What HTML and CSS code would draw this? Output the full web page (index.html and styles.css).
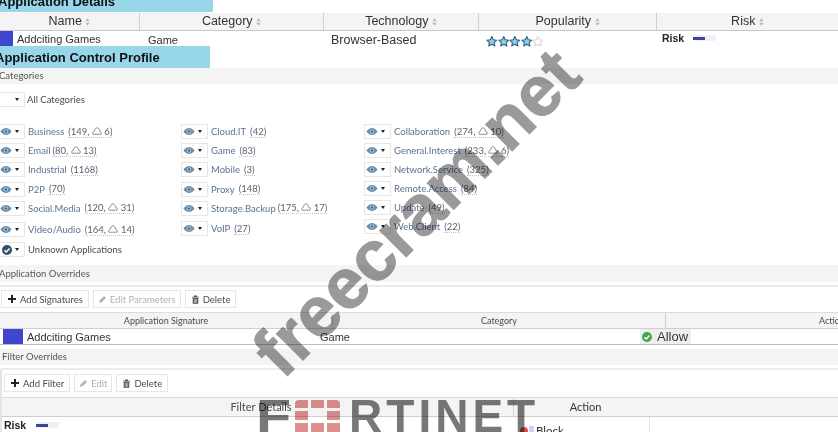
FILE: index.html
```html
<!DOCTYPE html>
<html>
<head>
  <title>Application Control Profile</title>
  <link rel="stylesheet" href="styles.css">
</head>
<body>
  <svg class="icon-defs" width="0" height="0">
    <symbol id="eye" viewBox="0 0 16 10">
      <path d="M0 5C3 1 5.500 0 8 0s5 1 8 5c-3 4-5.500 5-8 5s-5-1-8-5z" fill="#6b8fab"/>
      <circle cx="8" cy="5" r="2.800" fill="#d5e1ea"/>
      <circle cx="8" cy="5" r="1.800" fill="#3d6382"/>
    </symbol>
    <symbol id="cloud" viewBox="0 0 14 10">
      <path d="M1.500 9.500h11c1.300-2.200.3-4-1.800-4C10 2 8.700.6 7 .6 5 .6 3.800 2.500 3.500 5 1.500 5.500.3 7.500 1.500 9.500z" fill="none" stroke="#5a6472" stroke-width="1"/>
    </symbol>
    <symbol id="star" viewBox="0 0 14 14">
      <path d="M7 1l1.800 3.900 4.200.5-3.100 2.900.8 4.200L7 10.400 3.300 12.500l.8-4.200L1 5.400l4.200-.5z" stroke-width="1.300" stroke-linejoin="round"/>
    </symbol>
    <symbol id="trash" viewBox="0 0 10 12">
      <path d="M0 2h10v1.300H0zM3 .3h4V2H3zM1 4h8v8H1z" fill="#4d4d4d"/>
      <path d="M3.200 5v5.800M5 5v5.800M6.800 5v5.800" stroke="#fff" stroke-width=".8"/>
    </symbol>
    <symbol id="pencil" viewBox="0 0 12 12">
      <path d="M0 12l1-4 6.500-6.500 3 3L4 11z" fill="#b4b4b4"/>
    </symbol>
    <symbol id="sort" viewBox="0 0 6 9">
      <path d="M3 0l2.500 3.500h-5zM3 9L.5 5.500h5z" fill="#b8b8b8"/>
    </symbol>
    <symbol id="tick" viewBox="0 0 12 12">
      <circle cx="6" cy="6" r="6"/>
      <path d="M3 6.200l2.200 2.200L9 4.300" fill="none" stroke="#fff" stroke-width="1.700"/>
    </symbol>
  </svg>

  <div class="page">
    <h2 class="banner banner-details">Application Details</h2>

    <div class="app-head">
      <div class="app-th th-name">Name <svg class="sort"><use href="#sort"/></svg></div>
      <div class="app-th th-cat">Category <svg class="sort"><use href="#sort"/></svg></div>
      <div class="app-th th-tech">Technology <svg class="sort"><use href="#sort"/></svg></div>
      <div class="app-th th-pop">Popularity <svg class="sort"><use href="#sort"/></svg></div>
      <div class="app-th th-risk">Risk <svg class="sort"><use href="#sort"/></svg></div>
    </div>
    <div class="app-row">
      <div class="cell-name"><span class="swatch"></span>Addciting Games</div>
      <div class="cell-cat">Game</div>
      <div class="cell-tech">Browser-Based</div>
      <div class="cell-pop">
        <svg class="star on"><use href="#star"/></svg><svg class="star on"><use href="#star"/></svg><svg class="star on"><use href="#star"/></svg><svg class="star on"><use href="#star"/></svg><svg class="star off"><use href="#star"/></svg>
      </div>
      <div class="cell-risk"><b>Risk</b><span class="risk-bar"><span></span></span></div>
    </div>

    <h2 class="banner banner-profile">Application Control Profile</h2>

    <div class="section-bar">Categories</div>
    <div class="all-cats">
      <span class="drop drop-blank"><i class="caret"></i></span>
      <span>All Categories</span>
    </div>

    <div class="cat-grid">
      <div class="cat-col col-a">
        <div class="cat"><span class="drop"><svg class="eye"><use href="#eye"/></svg><i class="caret"></i></span><a>Business</a><span class="count">(149, <svg class="cloud"><use href="#cloud"/></svg> 6)</span></div>
        <div class="cat"><span class="drop"><svg class="eye"><use href="#eye"/></svg><i class="caret"></i></span><a>Email</a><span class="count tight">(80, <svg class="cloud"><use href="#cloud"/></svg> 13)</span></div>
        <div class="cat"><span class="drop"><svg class="eye"><use href="#eye"/></svg><i class="caret"></i></span><a>Industrial</a><span class="count">(1168)</span></div>
        <div class="cat"><span class="drop"><svg class="eye"><use href="#eye"/></svg><i class="caret"></i></span><a>P2P</a><span class="count">(70)</span></div>
        <div class="cat"><span class="drop"><svg class="eye"><use href="#eye"/></svg><i class="caret"></i></span><a>Social.Media</a><span class="count">(120, <svg class="cloud"><use href="#cloud"/></svg> 31)</span></div>
        <div class="cat"><span class="drop"><svg class="eye"><use href="#eye"/></svg><i class="caret"></i></span><a>Video/Audio</a><span class="count">(164, <svg class="cloud"><use href="#cloud"/></svg> 14)</span></div>
        <div class="cat"><span class="drop"><svg class="check"><use href="#tick"/></svg><i class="caret"></i></span><span class="unknown">Unknown Applications</span></div>
      </div>
      <div class="cat-col col-b">
        <div class="cat"><span class="drop"><svg class="eye"><use href="#eye"/></svg><i class="caret"></i></span><a>Cloud.IT</a><span class="count">(42)</span></div>
        <div class="cat"><span class="drop"><svg class="eye"><use href="#eye"/></svg><i class="caret"></i></span><a>Game</a><span class="count">(83)</span></div>
        <div class="cat"><span class="drop"><svg class="eye"><use href="#eye"/></svg><i class="caret"></i></span><a>Mobile</a><span class="count">(3)</span></div>
        <div class="cat"><span class="drop"><svg class="eye"><use href="#eye"/></svg><i class="caret"></i></span><a>Proxy</a><span class="count">(148)</span></div>
        <div class="cat"><span class="drop"><svg class="eye"><use href="#eye"/></svg><i class="caret"></i></span><a>Storage.Backup</a><span class="count tight">(175, <svg class="cloud"><use href="#cloud"/></svg> 17)</span></div>
        <div class="cat"><span class="drop"><svg class="eye"><use href="#eye"/></svg><i class="caret"></i></span><a>VoIP</a><span class="count">(27)</span></div>
      </div>
      <div class="cat-col col-c">
        <div class="cat"><span class="drop"><svg class="eye"><use href="#eye"/></svg><i class="caret"></i></span><a>Collaboration</a><span class="count">(274, <svg class="cloud"><use href="#cloud"/></svg> 10)</span></div>
        <div class="cat"><span class="drop"><svg class="eye"><use href="#eye"/></svg><i class="caret"></i></span><a>General.Interest</a><span class="count">(233, <svg class="cloud"><use href="#cloud"/></svg> 6)</span></div>
        <div class="cat"><span class="drop"><svg class="eye"><use href="#eye"/></svg><i class="caret"></i></span><a>Network.Service</a><span class="count">(325)</span></div>
        <div class="cat"><span class="drop"><svg class="eye"><use href="#eye"/></svg><i class="caret"></i></span><a>Remote.Access</a><span class="count">(84)</span></div>
        <div class="cat"><span class="drop"><svg class="eye"><use href="#eye"/></svg><i class="caret"></i></span><a>Update</a><span class="count">(49)</span></div>
        <div class="cat"><span class="drop"><svg class="eye"><use href="#eye"/></svg><i class="caret"></i></span><a>Web.Client</a><span class="count">(22)</span></div>
      </div>
    </div>

    <div class="section-bar overrides">Application Overrides</div>
    <div class="toolbar">
      <button class="btn"><i class="plus"></i>Add Signatures</button>
      <button class="btn off"><svg class="pencil"><use href="#pencil"/></svg>Edit Parameters</button>
      <button class="btn"><svg class="trash"><use href="#trash"/></svg>Delete</button>
    </div>
    <div class="sig-head">
      <div class="sig-th sig-a">Application Signature</div>
      <div class="sig-th sig-b">Category</div>
      <div class="sig-th sig-c">Action</div>
    </div>
    <div class="sig-row">
      <div class="sig-name"><span class="swatch big"></span>Addciting Games</div>
      <div class="sig-cat">Game</div>
      <div class="sig-action"><span class="allow"><svg class="ok"><use href="#tick"/></svg>Allow</span></div>
    </div>

    <div class="section-bar filters">Filter Overrides</div>
    <div class="filter-box">
      <div class="toolbar filter-tools">
        <button class="btn"><i class="plus"></i>Add Filter</button>
        <button class="btn off"><svg class="pencil"><use href="#pencil"/></svg>Edit</button>
        <button class="btn"><svg class="trash"><use href="#trash"/></svg>Delete</button>
      </div>
      <div class="filter-head">
        <div class="f-th f-a">Filter Details</div>
        <div class="f-th f-b">Action</div>
      </div>
      <div class="filter-row">
        <div class="f-risk"><b>Risk</b><span class="risk-bar"><span></span></span></div>
        <div class="f-block"><span class="no"></span><span class="mini"></span>Block</div>
      </div>
    </div>
  </div>

  <!-- watermark and logo lie on top of the page -->
  <div class="watermark">freecram.net</div>
  <div class="logo"><span class="logo-f">F</span><svg class="logo-o" viewBox="0 0 45 34"><path d="M4 0h9v8H0V4q0-4 4-4zM16 0h13v8H16zM32 0h9q4 0 4 4v4H32zM0 11h13v9H0zM32 11h13v9H32zM0 23h13v11H4q-4 0-4-4zM16 23h13v11H16zM32 23h13v7q0 4-4 4h-9z" fill="#dd8f8d"/></svg>RTINET</div>
</body>
</html>
```

FILE: styles.css
```css
body {
  margin: 0;
  width: 838px;
  height: 432px;
  overflow: hidden;
  position: relative;
  background-color: #fff;
  font-family: "Lato", "Open Sans", sans-serif;
  font-size: 9.500px;
  color: #4a4a4a;
}

.icon-defs {
  position: absolute;
}

.page {
  display: flex;
  flex-direction: column;
  height: 432px;
  overflow: hidden;
}

.banner {
  flex: none;
  margin: 0;
  background-color: #97d7e9;
  color: #111;
  font-family: "Liberation Sans", Arial, sans-serif;
  font-weight: bold;
  font-size: 13px;
  white-space: nowrap;
}
.banner-details {
  width: 213px;
  height: 12px;
  line-height: 4px;
  text-indent: -2px;
}
.banner-profile {
  width: 210px;
  height: 22px;
  line-height: 24px;
  text-indent: -5px;
}

/* top table */
.app-head {
  display: flex;
  flex: none;
  height: 17px;
  margin-top: 1px;
  background-color: #f4f4f4;
  border-bottom: 1px solid #c8c8c8;
  font-family: "Liberation Sans", Arial, sans-serif;
  font-size: 12.500px;
  color: #333;
}
.app-th {
  text-align: center;
  line-height: 17px;
  border-right: 1px solid #cfcfcf;
}
.th-name { width: 139px; }
.th-cat { width: 183px; }
.th-tech { width: 154px; }
.th-pop { width: 177px; }
.th-risk { flex: 1; border-right: none; }

.sort {
  width: 5px;
  height: 8px;
  vertical-align: -1px;
}

.app-row {
  display: flex;
  flex: none;
  height: 15px;
  font-family: "Liberation Sans", Arial, sans-serif;
  font-size: 11px;
  color: #333;
}
.cell-name {
  width: 148px;
  display: flex;
  align-items: center;
}
.swatch {
  width: 13px;
  height: 15px;
  margin-right: 4px;
  background-color: #3f48cc;
}
.cell-cat {
  width: 183px;
  padding-top: 3px;
}
.cell-tech {
  width: 155px;
  font-size: 12.500px;
  line-height: 18px;
}
.cell-pop {
  width: 176px;
  display: flex;
  padding-top: 4px;
}
.star {
  width: 11.600px;
  height: 13px;
  overflow: visible;
}
.star.on { fill: #8fd0ee; stroke: #2f5f80; }
.star.off { fill: #fff; stroke: #d8d8d8; }
.cell-risk {
  display: flex;
  height: 14px;
  align-items: center;
}
.cell-risk b, .f-risk b {
  font-size: 10.500px;
  color: #222;
}
.risk-bar {
  display: inline-block;
  width: 23px;
  height: 6px;
  margin-left: 9px;
  background-color: #eef1f6;
  border-radius: 2px;
}
.risk-bar span {
  display: block;
  width: 12px;
  height: 3px;
  margin-top: 1.500px;
  background-color: #3b429f;
}

/* section bars */
.section-bar {
  flex: none;
  background-color: #f4f4f4;
  height: 16px;
  line-height: 16px;
  text-indent: -1px;
  color: #555;
}

.all-cats {
  display: flex;
  flex: none;
  align-items: center;
  gap: 2px;
  height: 16px;
  margin-top: 7px;
}

.drop {
  display: inline-flex;
  align-items: center;
  justify-content: flex-end;
  flex: none;
  box-sizing: border-box;
  width: 26px;
  height: 15px;
  margin-left: -1px;
  padding-right: 5px;
  border: 1px solid #e6e6e6;
  background-color: #fff;
  gap: 3px;
}
.caret {
  width: 0;
  height: 0;
  border-left: 2.500px solid transparent;
  border-right: 2.500px solid transparent;
  border-top: 3px solid #222;
}
.eye {
  width: 12px;
  height: 7px;
}
.check {
  width: 10px;
  height: 10px;
  fill: #33526e;
}

.cat-grid {
  display: flex;
  flex: none;
  height: 133px;
  margin-top: 17px;
}
.col-a { width: 182px; }
.col-b { width: 183px; }
.cat-col {
  display: flex;
  flex-direction: column;
  gap: 4px;
}
.col-c { gap: 3.800px; }
.col-b .drop, .col-c .drop { width: 27px; }
.cat {
  display: flex;
  flex: none;
  align-items: center;
  height: 15.200px;
  white-space: nowrap;
}
.col-a .cat:nth-child(6) { margin-top: 2px; }
.col-a .cat:nth-child(7) { margin-top: 1px; }
.col-b .cat:nth-child(6) { margin-top: 1px; }
.cat a {
  margin-left: 3px;
  color: #5b7391;
}
.count {
  margin-left: 4px;
  color: #5a6472;
  border-bottom: 1px dotted #c4c4c4;
}
.count.tight { margin-left: 2px; }
.cloud {
  width: 10px;
  height: 8px;
}
.unknown {
  margin-left: 3px;
  color: #4a4a4a;
}

.overrides {
  margin-top: 8px;
  height: 17px;
  line-height: 17px;
}

.toolbar {
  display: flex;
  flex: none;
  gap: 4px;
  box-sizing: border-box;
  height: 27px;
  margin-top: 3px;
  padding: 3px 0 0 1px;
  border-top: 2px solid #ececec;
}
.btn {
  display: inline-flex;
  align-items: center;
  height: 18px;
  padding: 0 5px 0 6px;
  gap: 4px;
  border: 1px solid #e6e6e6;
  background-color: #fff;
  font-family: inherit;
  font-size: 9.500px;
  color: #4a4a4a;
}
.btn.off {
  padding: 0 4px 0 5px;
  gap: 3px;
  color: #b0b0b0;
}
.plus {
  width: 8px;
  height: 8px;
  background:
    linear-gradient(#222, #222) center / 8px 2px no-repeat,
    linear-gradient(#222, #222) center / 2px 8px no-repeat;
}
.pencil { width: 8px; height: 8px; }
.trash { width: 7px; height: 9px; }

.sig-head {
  display: flex;
  flex: none;
  box-sizing: border-box;
  height: 17px;
  background-color: #f4f4f4;
  border-top: 1px solid #dcdcdc;
  border-bottom: 1px solid #cfcfcf;
  line-height: 15px;
  font-size: 9px;
  white-space: nowrap;
}
.sig-th { flex: none; text-align: center; }
.sig-a { width: 332px; border-right: 1px solid #d4d4d4; }
.sig-b { width: 332px; border-right: 1px solid #cfcfcf; }
.sig-c { padding-left: 153px; text-align: left; }

.sig-row {
  display: flex;
  flex: none;
  align-items: center;
  box-sizing: border-box;
  height: 16px;
  border-bottom: 1px solid #bdbdbd;
  font-family: "Liberation Sans", Arial, sans-serif;
  font-size: 11px;
  color: #333;
}
.sig-name {
  display: flex;
  align-items: center;
  width: 320px;
}
.swatch.big {
  width: 20px;
  height: 15px;
  margin: 0 4px 0 3px;
}
.sig-cat { width: 320px; }
.allow {
  display: inline-flex;
  align-items: center;
  gap: 5px;
  width: 51px;
  height: 15px;
  box-sizing: border-box;
  padding-left: 2px;
  background-color: #eceff0;
  font-size: 13px;
}
.ok {
  width: 10px;
  height: 10px;
  fill: #3fa84a;
}

.filters {
  margin-top: 4px;
  height: 16px;
  text-indent: 2px;
}
.filter-box {
  flex: 1;
  margin-top: 3px;
  border-left: 2px solid #e4e4e4;
}
.filter-tools {
  height: 29px;
  margin: 0 0 0 -2px;
  padding: 4px 0 0 4px;
}

.filter-head {
  display: flex;
  box-sizing: border-box;
  height: 20px;
  background-color: #f4f4f4;
  border-top: 1px solid #dcdcdc;
  border-bottom: 1px solid #cfcfcf;
  line-height: 18px;
  font-size: 11px;
  white-space: nowrap;
}
.f-a {
  box-sizing: border-box;
  width: 512px;
  padding-left: 7px;
  text-align: center;
  border-right: 1px solid #d4d4d4;
}
.f-b {
  width: 143px;
  text-align: center;
  color: #333;
}
.filter-row {
  display: flex;
  height: 15px;
}
.f-risk {
  display: flex;
  align-items: center;
  box-sizing: border-box;
  width: 516px;
  height: 16px;
  padding-left: 2px;
  font-family: "Liberation Sans", Arial, sans-serif;
}
.f-risk .risk-bar { margin-left: 10px; }
.f-block {
  display: flex;
  align-items: center;
  box-sizing: border-box;
  width: 132px;
  height: 20px;
  padding: 7px 0 0 2px;
  border-right: 1px solid #e4e4e4;
  font-size: 11.500px;
  color: #333;
}
.no {
  width: 8px;
  height: 8px;
  border-radius: 50%;
  background-color: #d9534f;
}
.mini {
  width: 5px;
  height: 9px;
  margin: 0 2px 0 1px;
  background-color: #c9d4ee;
}

/* overlays, multiplied so the page text still reads through them */
.watermark {
  position: absolute;
  left: 203px;
  top: 177px;
  transform: rotate(-45deg);
  font-family: "Liberation Sans", Arial, sans-serif;
  font-weight: bold;
  font-size: 71px;
  line-height: 71px;
  color: #9a9a9a;
  -webkit-text-stroke: 1px #9a9a9a;
  mix-blend-mode: multiply;
  white-space: nowrap;
}
.logo {
  position: absolute;
  left: 259px;
  top: 393px;
  display: flex;
  align-items: flex-start;
  font-family: "Liberation Sans", Arial, sans-serif;
  font-weight: bold;
  font-size: 46px;
  line-height: 46px;
  letter-spacing: 4px;
  color: #787878;
  mix-blend-mode: multiply;
  white-space: nowrap;
}
.logo-f {
  display: inline-block;
  margin-left: -3px;
  margin-right: 3px;
  transform: scaleX(1.25);
  transform-origin: left;
}
.logo-o {
  width: 45px;
  height: 34px;
  margin: 7px 9px 0 4px;
}
```
